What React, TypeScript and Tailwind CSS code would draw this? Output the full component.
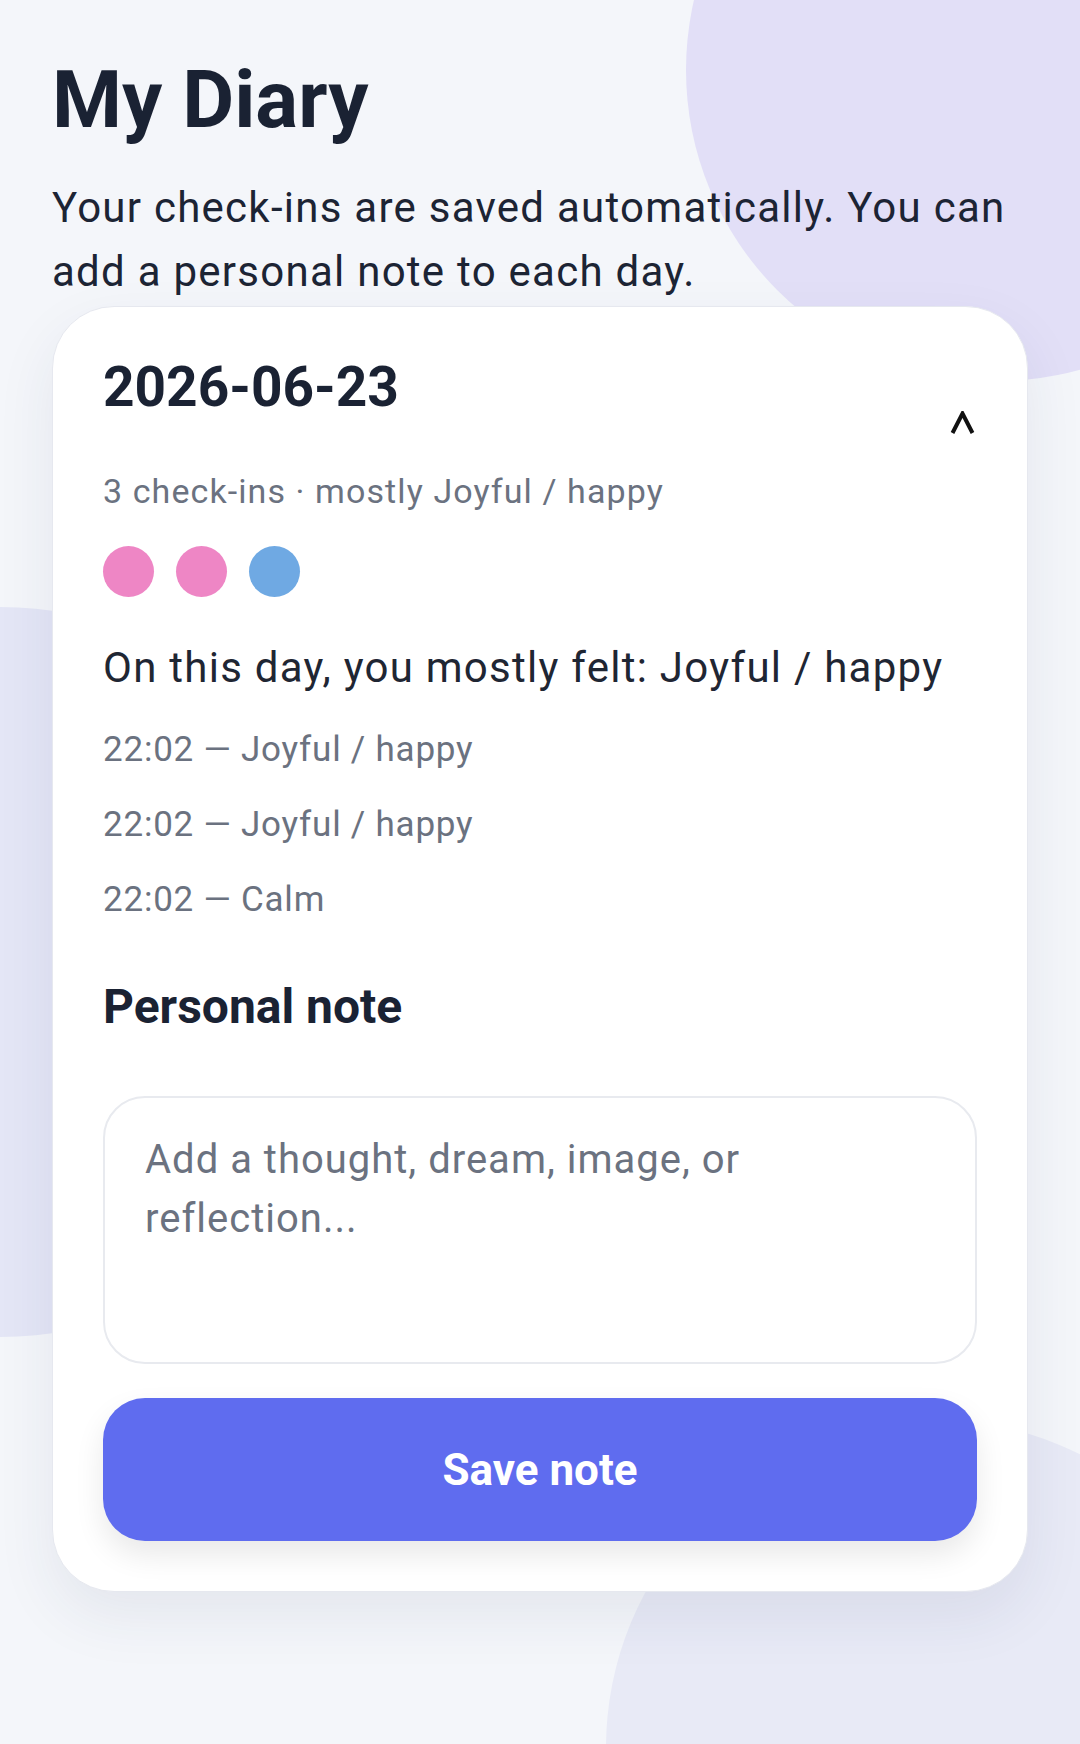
import React from "react";

const entries = [
  { time: "22:02", mood: "Joyful / happy" },
  { time: "22:02", mood: "Joyful / happy" },
  { time: "22:02", mood: "Calm" },
];

const dots = ["bg-[#ee86c5]", "bg-[#ee86c5]", "bg-[#6fa9e3]"];

export default function App() {
  return (
    <main
      className="relative min-h-[1744px] w-full overflow-hidden bg-[#f4f6fa] px-[52px] pt-[52px]"
      style={{ fontFamily: "Roboto, 'Noto Sans', sans-serif" }}
    >
      {/* background blobs */}
      <div className="absolute left-[686px] top-[-241px] h-[622px] w-[622px] rounded-full bg-[#e2dff7]" />
      <div className="absolute left-[-365px] top-[607px] h-[730px] w-[730px] rounded-full bg-[#e4e6f6]" />
      <div className="absolute left-[606px] top-[1420px] h-[656px] w-[656px] rounded-full bg-[#e8eaf6]" />

      <div className="relative z-10">
        <h1 className="text-[80px] leading-[96px] font-bold text-[#1a2233]">My Diary</h1>
        <p className="mt-[28px] text-[42px] leading-[64px] tracking-[0.03em] text-[#1c2434]">
          Your check-ins are saved automatically. You can add a personal note to each day.
        </p>

        <section className="mt-[2px] rounded-[62px] border border-[#e6e8ef] bg-white p-[50px] shadow-[0_24px_60px_rgba(40,50,90,0.08)]">
          <div className="flex items-start justify-between">
            <div>
              <h2 className="text-[55px] leading-[60px] font-bold text-[#1a2233]">2026-06-23</h2>
              <p className="mt-[50px] text-[34px] leading-[48px] tracking-[0.032em] text-[#6b7280]">
                3 check-ins · mostly Joyful / happy
              </p>
            </div>
            <button className="mt-[54px] mr-[2px]" aria-label="Collapse">
              <svg width="25" height="23" viewBox="0 0 25 23" fill="none">
                <polyline
                  points="2.5,22 12.5,2.5 22.5,22"
                  stroke="#111"
                  strokeWidth="4"
                  strokeLinejoin="miter"
                />
              </svg>
            </button>
          </div>

          <div className="mt-[31px] flex gap-[22px]">
            {dots.map((c, i) => (
              <span key={i} className={`h-[51px] w-[51px] rounded-full ${c}`} />
            ))}
          </div>

          <p className="mt-[43px] text-[42px] leading-[56px] tracking-[0.03em] text-[#1f2633]">
            On this day, you mostly felt: Joyful / happy
          </p>

          <ul className="mt-[16px]">
            {entries.map((e, i) => (
              <li key={i} className="text-[35px] leading-[75px] tracking-[0.022em] text-[#6b7280]">
                {e.time} — {e.mood}
              </li>
            ))}
          </ul>

          <h3 className="mt-[41px] text-[48px] leading-[58px] font-bold text-[#1a2233]">Personal note</h3>

          <textarea
            className="mt-[60px] block h-[268px] w-full resize-none rounded-[42px] border-2 border-[#e8eaef] bg-white pl-[40px] pr-[40px] pt-[32px] text-[40px] leading-[59px] tracking-[0.025em] text-[#1f2633] placeholder:text-[#6b7280] outline-none"
            placeholder="Add a thought, dream, image, or reflection..."
          />

          <button className="mt-[34px] flex h-[143px] w-full items-center justify-center rounded-[42px] bg-[#5f6cef] text-[44px] font-bold text-white shadow-[0_14px_30px_rgba(0,0,0,0.09)]">
            Save note
          </button>
        </section>
      </div>
    </main>
  );
}
